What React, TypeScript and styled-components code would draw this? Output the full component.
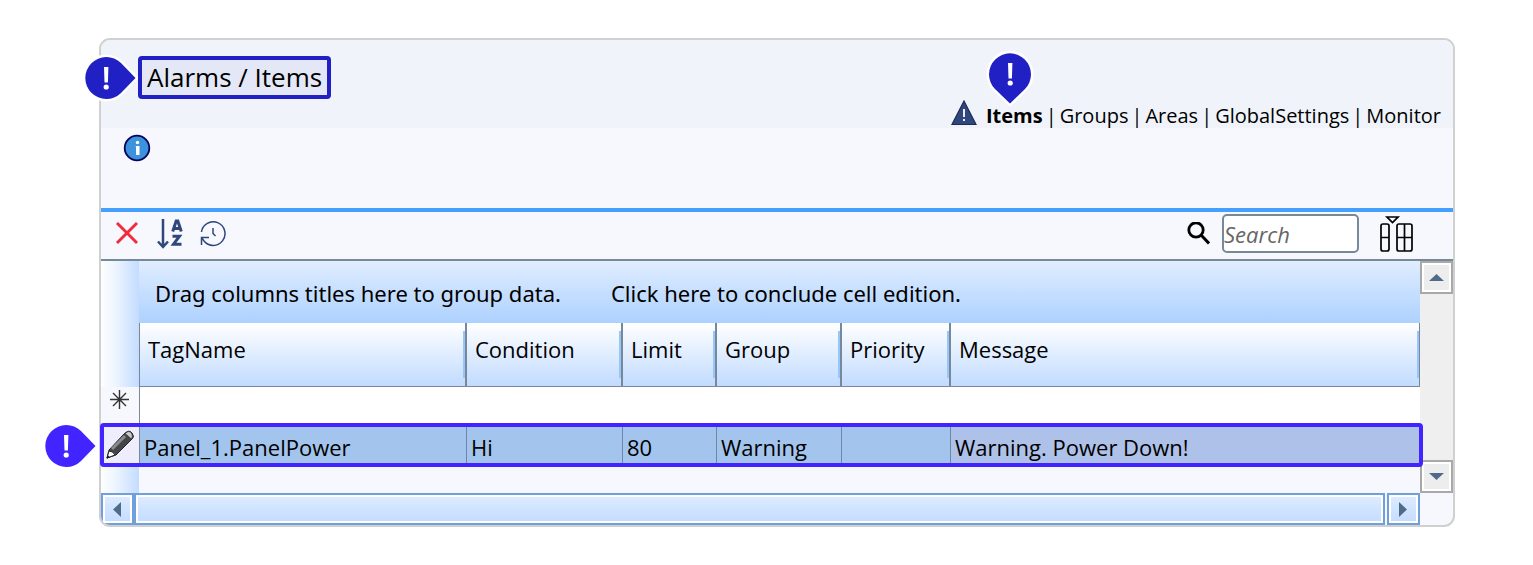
import React from "react";
import styled, { createGlobalStyle, css } from "styled-components";

const Global = createGlobalStyle`
  * { box-sizing: border-box; }
  body { margin: 0; background: #fff; color: #000; font-family: "Open Sans", "Noto Sans", sans-serif; }
`;

const Page = styled.main`
  padding: 38px 78px 38px 99px;
`;

const Window = styled.section`
  position: relative;
  border: 2px solid #d0d0d0;
  border-radius: 11px;
  background: #f6f8fd;
`;

const Header = styled.header`
  display: flex;
  justify-content: space-between;
  align-items: flex-start;
  height: 88px;
  padding: 16px 12px 0 37px;
  border-radius: 9px 9px 0 0;
  background: #f0f4fa;
`;

const TitleBox = styled.div`
  position: relative;
  height: 43px;
  padding: 0 5px;
  border: 4px solid #2020c4;
  border-radius: 4px;
  background: #e4e8f6;
`;

const Title = styled.h1`
  margin: 0;
  font-size: 26px;
  line-height: 35px;
  font-weight: 400;
  white-space: nowrap;
`;

const Nav = styled.nav`
  display: flex;
  align-items: center;
  gap: 3px;
  margin-top: 44px;
  font-size: 20px;
  line-height: 28px;
  white-space: nowrap;
`;

const NavLink = styled.a<{ $current?: boolean }>`
  position: relative;
  color: #000;
  text-decoration: none;
  font-weight: ${(p) => (p.$current ? 700 : 400)};
`;

const WarnIcon = styled.svg`
  display: block;
  margin: 0 6px 6px 0;
`;

const pins = {
  left: css`
    left: -57px;
    top: -3px;
  `,
  top: css`
    left: 3px;
    top: -49px;
  `,
  row: css`
    left: -59px;
    top: -2px;
  `,
};

const Pin = styled.svg<{ $place: keyof typeof pins }>`
  position: absolute;
  overflow: visible;
  ${(p) => pins[p.$place]}
`;

const InfoArea = styled.div`
  height: 80px;
  padding: 6px 22px;
`;

const Toolbar = styled.div`
  display: flex;
  align-items: center;
  height: 53px;
  padding: 0 39px 4px 14px;
  border-top: 4px solid #459ffc;
  border-bottom: 2px solid #778899;
`;

const IconButton = styled.button<{ $gap?: number }>`
  display: block;
  margin: 0 ${(p) => p.$gap ?? 0}px 0 0;
  padding: 0;
  border: 0;
  background: none;
  svg { display: block; }
`;

const SearchLabel = styled.label`
  display: flex;
  align-items: center;
  gap: 12px;
  margin: 0 19px 0 auto;
`;

const SearchBox = styled.input`
  width: 137px;
  height: 39px;
  padding: 0;
  border: 2px solid #778899;
  border-radius: 5px;
  background: #fff;
  font: italic 22px "Open Sans", "Noto Sans", sans-serif;
  &::placeholder { color: #666; opacity: 1; }
`;

const Body = styled.div`
  display: flex;
`;

const Content = styled.div`
  position: relative;
  flex: 1;
  min-width: 0;
`;

const sideFill = css`
  background: linear-gradient(90deg, #fdfeff 0%, #edf4ff 40%, #c3dcff 100%);
`;

const GroupRow = styled.div`
  display: flex;
  height: 62px;
`;

const SideCell = styled.div`
  width: 38px;
  flex: none;
  ${sideFill}
`;

const GroupBar = styled.div`
  flex: 1;
  display: flex;
  gap: 50px;
  padding-left: 16px;
  font-family: "Noto Sans", "Open Sans", sans-serif;
  font-size: 22px;
  line-height: 64px;
  white-space: nowrap;
  background: linear-gradient(#e0edff, #add1ff);
`;

const Grid = styled.table`
  width: 100%;
  border-collapse: separate;
  border-spacing: 0;
  table-layout: fixed;
  text-align: left;
  white-space: nowrap;
  font-size: 22px;
  line-height: 30px;
`;

const Col = styled.col<{ $w?: number }>`
  width: ${(p) => (p.$w ? `${p.$w}px` : "auto")};
`;

const HeadSide = styled.th`
  ${sideFill}
  padding: 0;
  border-right: 1px solid #778899;
`;

const HeadCell = styled.th<{ $last?: boolean }>`
  height: 64px;
  padding: 0 0 12px 8px;
  font-weight: 400;
  border-right: ${(p) => (p.$last ? 1 : 2)}px solid #778899;
  border-bottom: 1px solid #778899;
  background:
    linear-gradient(#99c5ff, #99c5ff) right 8px / 2px 47px no-repeat,
    linear-gradient(#ffffff, #c1dbff);
`;

const NewSide = styled.th`
  height: 36px;
  padding: 0 0 11px 9px;
  border-right: 1px solid #778899;
  svg { display: block; }
`;

const NewCell = styled.td`
  padding: 0;
  background: #fff;
`;

const RowSide = styled.th`
  height: 44px;
  padding: 0 0 0 4px;
  background: #ededfb;
  border-right: 1px solid #778899;
  svg { display: block; }
`;

const Cell = styled.td<{ $last?: boolean }>`
  padding: 4px 0 0 4px;
  background: ${(p) => (p.$last ? "#aec1e9" : "#a3c5ed")};
  border-right: ${(p) => (p.$last ? 0 : 1)}px solid #6f87a8;
`;

const RowOutline = styled.div`
  position: absolute;
  left: -1px;
  right: -3px;
  bottom: 26px;
  height: 44px;
  border: 4px solid #4124ff;
  border-radius: 4px;
  pointer-events: none;
`;

const Tail = styled.div`
  height: 26px;
  display: flex;
`;

const VScroll = styled.div`
  display: flex;
  flex-direction: column;
  justify-content: space-between;
  width: 33px;
  background: #efefef;
`;

const ScrollButton = styled.button<{ $blue?: boolean }>`
  display: flex;
  align-items: center;
  justify-content: center;
  flex: none;
  width: 33px;
  height: ${(p) => (p.$blue ? 32 : 33)}px;
  padding: 0;
  border: 2px solid ${(p) => (p.$blue ? "#6f9fdc" : "#a9a9a9")};
  background: ${(p) => (p.$blue ? "linear-gradient(#deecff, #c3dcff)" : "#ededed")};
  box-shadow: inset 0 0 0 2px #fff;
`;

const HScroll = styled.div`
  display: flex;
  gap: 2px;
  height: 32px;
  margin-right: 33px;
  border-radius: 0 0 0 9px;
  overflow: hidden;
`;

const Thumb = styled.div`
  flex: 1;
  margin-left: -4px;
  border: 2px solid #6f9fdc;
  border-left-width: 4px;
  background: linear-gradient(#deecff, #c3dcff);
  box-shadow: inset 0 0 0 2px #fff;
`;

const Marker = ({ place, fill, ring }: { place: keyof typeof pins; fill: string; ring?: boolean }) => {
  const down = place === "top";
  return (
    <Pin $place={place} width={down ? 42 : 52} height={down ? 52 : 42} aria-hidden="true">
      <path
        d={down
          ? "M21 50.500 L6 36 A21 21 0 1 1 36 36 Z"
          : "M50.500 21 L36 6 A21 21 0 1 0 36 36 Z"}
        fill={fill}
        stroke={ring ? "#fff" : "none"}
        strokeWidth="5"
        strokeLinejoin="round"
        paintOrder="stroke"
      />
      <path d="M19 10h4.400l-.5 15.500h-3.400z" fill="#fff" />
      <circle cx="21.200" cy="30" r="2.600" fill="#fff" />
    </Pin>
  );
};

const Arrow = ({ dir }: { dir: "up" | "down" | "left" | "right" }) => {
  const shapes = {
    up: "M1 12L8.500 5L16 12Z",
    down: "M1 5L8.500 12L16 5Z",
    left: "M12 1V16L4 8.500Z",
    right: "M4 1V16L12 8.500Z",
  };
  return (
    <svg width="17" height="17" aria-hidden="true">
      <path d={shapes[dir]} fill="#506b89" />
    </svg>
  );
};

const columns: { name: string; width?: number; value: string }[] = [
  { name: "TagName", width: 327, value: "Panel_1.PanelPower" },
  { name: "Condition", width: 156, value: "Hi" },
  { name: "Limit", width: 94, value: "80" },
  { name: "Group", width: 125, value: "Warning" },
  { name: "Priority", width: 109, value: "" },
  { name: "Message", value: "Warning. Power Down!" },
];

const links = ["Items", "Groups", "Areas", "GlobalSettings", "Monitor"];

export default function App() {
  const last = columns.length - 1;
  return (
    <>
      <Global />
      <Page>
        <Window>
          <Header>
            <TitleBox>
              <Title>Alarms / Items</Title>
              <Marker place="left" fill="#2020c4" ring />
            </TitleBox>
            <Nav>
              <WarnIcon width="26" height="26" aria-hidden="true">
                <path d="M13 1L25 24.500H1Z" fill="#30477d" stroke="#1d2b52" strokeWidth="1.200" />
                <path d="M13 9v8M13 19v2" stroke="#fff" strokeWidth="1.800" />
              </WarnIcon>
              {links.map((name, i) => (
                <React.Fragment key={name}>
                  {i > 0 && <span>|</span>}
                  <NavLink href="#" $current={i === 0}>
                    {name}
                    {i === 0 && <Marker place="top" fill="#2020c4" ring />}
                  </NavLink>
                </React.Fragment>
              ))}
            </Nav>
          </Header>
          <InfoArea>
            <IconButton aria-label="Information">
              <svg width="28" height="28">
                <circle cx="14" cy="14" r="12.300" fill="#3c92dd" stroke="#04045c" strokeWidth="1.800" />
                <path d="M12.500 12h4v9h-3.500v-8z" fill="#fff" />
                <circle cx="14.500" cy="8.500" r="1.700" fill="#fff" />
              </svg>
            </IconButton>
          </InfoArea>
          <Toolbar>
            <IconButton $gap={18} aria-label="Delete">
              <svg width="24" height="24">
                <path d="M2 1L22 21M22 1L2 21" stroke="#f22a3c" strokeWidth="2.900" />
              </svg>
            </IconButton>
            <IconButton $gap={17} aria-label="Sort">
              <svg width="26" height="30" fill="none" stroke="#30477d">
                <path d="M6 0V28M1 22.500L6 28L11 22.500" strokeWidth="2.500" />
                <path d="M15.700 12.500L19.200 2H20.800L24.300 12.500M17 9.500H23" strokeWidth="3" />
                <path d="M15.500 17.200H22.500L16.500 25.200H24.500" strokeWidth="3" />
              </svg>
            </IconButton>
            <IconButton aria-label="History">
              <svg width="26" height="26" fill="none" stroke="#30477d" strokeWidth="1.500">
                <path d="M1.500 11A11.800 11.800 0 1 1 4 20L1.500 16.500M1.500 24V16.500H9" />
                <path d="M13 7V12.500L15.500 15" />
              </svg>
            </IconButton>
            <SearchLabel>
              <svg width="24" height="24" fill="none" stroke="#000" role="img" aria-label="Search">
                <circle cx="10" cy="8" r="7.200" strokeWidth="2.800" />
                <path d="M15 13L23 21.500" strokeWidth="3" />
              </svg>
              <SearchBox type="text" placeholder="Search" />
            </SearchLabel>
            <IconButton aria-label="Choose columns">
              <svg width="36" height="36" fill="none" stroke="#000" strokeWidth="1.700">
                <path d="M9 1H20L14.500 6.500Z" />
                <rect x="3" y="8" width="8" height="27" rx="2" />
                <rect x="19" y="8" width="15" height="27" rx="2" />
                <path d="M3 21.500H11M19 21.500H34M26.500 8V35" />
              </svg>
            </IconButton>
          </Toolbar>
          <Body>
            <Content>
              <GroupRow>
                <SideCell />
                <GroupBar>
                  <span>Drag columns titles here to group data.</span>
                  <span>Click here to conclude cell edition.</span>
                </GroupBar>
              </GroupRow>
              <Grid>
                <colgroup>
                  <Col $w={39} />
                  {columns.map((c) => <Col key={c.name} $w={c.width} />)}
                </colgroup>
                <thead>
                  <tr>
                    <HeadSide />
                    {columns.map((c, i) => <HeadCell key={c.name} $last={i === last}>{c.name}</HeadCell>)}
                  </tr>
                </thead>
                <tbody>
                  <tr>
                    <NewSide>
                      <svg width="19" height="19" aria-hidden="true">
                        <path d="M9.500 0V19M0 9.500H19M3 3L16 16M16 3L3 16" stroke="#333" strokeWidth="1.400" />
                      </svg>
                    </NewSide>
                    <NewCell colSpan={columns.length} />
                  </tr>
                  <tr>
                    <RowSide>
                      <svg width="30" height="30" aria-hidden="true">
                        <path d="M2 28L4 20L19 4Q24 -1 27 3T27 9L11 25Z" fill="#454547" stroke="#222" strokeWidth="1" />
                        <path d="M7 19L20 6" stroke="#8b8b8e" strokeWidth="3" />
                        <path d="M2 28L4 21Q8 21 10 25Z" fill="#fff" stroke="#222" strokeWidth="1" />
                        <path d="M20 3.500L23 1.500Q26 1 27 4T26.500 9Z" fill="#c9c9cc" stroke="#333" strokeWidth=".8" />
                        <path d="M1.500 28.500L3 25.500L5 27.500Z" fill="#111" />
                      </svg>
                    </RowSide>
                    {columns.map((c, i) => <Cell key={c.name} $last={i === last}>{c.value}</Cell>)}
                  </tr>
                </tbody>
              </Grid>
              <Tail>
                <SideCell />
              </Tail>
              <RowOutline>
                <Marker place="row" fill="#4124ff" />
              </RowOutline>
            </Content>
            <VScroll>
              <ScrollButton aria-label="Scroll up"><Arrow dir="up" /></ScrollButton>
              <ScrollButton aria-label="Scroll down"><Arrow dir="down" /></ScrollButton>
            </VScroll>
          </Body>
          <HScroll>
            <ScrollButton $blue aria-label="Scroll left"><Arrow dir="left" /></ScrollButton>
            <Thumb />
            <ScrollButton $blue aria-label="Scroll right"><Arrow dir="right" /></ScrollButton>
          </HScroll>
        </Window>
      </Page>
    </>
  );
}
